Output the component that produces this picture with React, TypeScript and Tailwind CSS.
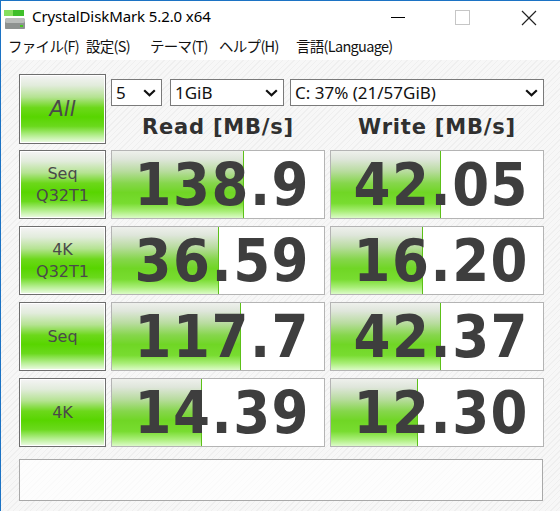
import React from "react";

const rows = [
  { label: ["Seq", "Q32T1"], read: "138.9", write: "42.05" },
  { label: ["4K", "Q32T1"], read: "36.59", write: "16.20" },
  { label: ["Seq"], read: "117.7", write: "42.37" },
  { label: ["4K"], read: "14.39", write: "12.30" },
];

function fillWidth(v: string) {
  const n = parseFloat(v);
  return Math.round(40.7 + 42.6 * Math.log10(n));
}

function Chevron() {
  return (
    <svg width="13" height="8" viewBox="0 0 13 8" className="shrink-0">
      <path d="M1.2 1.2 L6.5 6.3 L11.8 1.2" fill="none" stroke="#111" strokeWidth="2.2" />
    </svg>
  );
}

function Select({ w, text }: { w: string; text: string }) {
  return (
    <div
      className={`${w} h-[27px] bg-white border border-[#7a7a7a] flex items-center justify-between pl-[4px] pr-[5px] text-[17px] text-[#111]`}
      style={{ fontFamily: '"Noto Sans", sans-serif' }}
    >
      <span className="leading-none">{text}</span>
      <Chevron />
    </div>
  );
}

function GreenButton({ children }: { children: React.ReactNode }) {
  return (
    <div className="w-[87px] h-full border border-[#6e6e6e] p-px bg-white shrink-0">
      <div className="w-full h-full bg-[linear-gradient(to_bottom,#f3f3f3_0%,#e2ecdc_14%,#b5e392_32%,#6cd81a_48%,#58d500_62%,#6ad91c_76%,#b4ee8f_90%,#e8fadd_100%)] flex flex-col items-center justify-center text-[#4a4a4a] text-[16px] leading-[22px]"
        style={{ fontFamily: '"DejaVu Sans", sans-serif' }}>
        {children}
      </div>
    </div>
  );
}

function ValueCell({ value }: { value: string }) {
  const w = fillWidth(value);
  return (
    <div className="relative w-[214px] h-full border border-[#b4b4b4] bg-white overflow-hidden">
      <div
        className="absolute left-0 top-0 bottom-0 bg-[linear-gradient(to_bottom,#eef0ec_0%,#dfe6db_12%,#b9dca0_30%,#86d64c_48%,#70d625_62%,#78dc30_78%,#a9ee78_90%,#dcfbc8_100%)] border-r border-[#5cc018]"
        style={{ width: w }}
      />
      <div
        className="relative h-full flex items-center justify-end pr-[14px] text-[#3e3e3e] font-bold text-[59px] leading-none tracking-[1.5px]"
        style={{ fontFamily: '"DejaVu Sans Condensed", "DejaVu Sans", sans-serif', fontStretch: "condensed" }}
      >
        {value}
      </div>
    </div>
  );
}

export default function App() {
  return (
    <div className="w-[560px] h-[511px] bg-white border-l border-t border-[#1c73c4] overflow-hidden flex flex-col">
      {/* Title bar */}
      <div className="h-[30px] flex items-center shrink-0 relative">
        <svg width="24" height="24" viewBox="0 0 24 24" className="ml-[2px] mt-[2px]">
          <rect x="1" y="5" width="20" height="6" fill="#3fbf2a" />
          <rect x="1" y="5" width="9" height="6" fill="#86df5e" />
          <rect x="2" y="13" width="20" height="12" rx="2.5" fill="#8e9290" />
          <rect x="2" y="13" width="20" height="5" rx="2" fill="#b9bcba" />
          <rect x="17" y="20" width="3" height="2" fill="#46c81e" />
        </svg>
        <span className="ml-[5px] text-[15px] text-black tracking-[-0.1px]" style={{ fontFamily: '"Noto Sans", sans-serif' }}>
          CrystalDiskMark 5.2.0 x64
        </span>
        <div className="absolute left-[390px] top-[16px] w-[14px] h-px bg-black" />
        <div className="absolute left-[454px] top-[9px] w-[15px] h-[15px] border border-[#c6c6c6]" />
        <svg width="18" height="18" viewBox="0 0 18 18" className="absolute left-[519px] top-[8px]">
          <path d="M2 2 L16 16 M16 2 L2 16" stroke="#222" strokeWidth="1.2" />
        </svg>
      </div>
      {/* Menu bar */}
      <div className="h-[29px] flex items-center pl-[7px] text-[14.5px] tracking-[-0.7px] text-[#111] shrink-0 whitespace-nowrap"
        style={{ fontFamily: '"Noto Sans CJK JP", "Noto Sans", sans-serif' }}>
        <span className="w-[78px] shrink-0">ファイル(F)</span>
        <span className="w-[64px] shrink-0">設定(S)</span>
        <span className="w-[69px] shrink-0">テーマ(T)</span>
        <span className="w-[77px] shrink-0">ヘルプ(H)</span>
        <span className="shrink-0">言語(Language)</span>
      </div>
      {/* Content */}
      <div className="flex-1 bg-[repeating-linear-gradient(135deg,#f7f7f7_0px,#f7f7f7_3px,#efefef_3px,#efefef_4px)] pt-[14px] pl-[18px]">
        <div className="flex h-[70px] gap-[5px]">
          <GreenButton>
            <span className="text-[21px] italic">All</span>
          </GreenButton>
          <div className="flex flex-col">
            <div className="flex mt-[5px]">
              <Select w="w-[51px]" text="5" />
              <div className="w-[8px]" />
              <Select w="w-[114px]" text="1GiB" />
              <div className="w-[6px]" />
              <Select w="w-[254px]" text="C: 37% (21/57GiB)" />
            </div>
            <div className="flex gap-[5px] mt-[6px] text-[#303030] font-bold text-[21px] tracking-[0.8px]"
              style={{ fontFamily: '"DejaVu Sans", sans-serif' }}>
              <div className="w-[214px] text-center">Read [MB/s]</div>
              <div className="w-[214px] text-center">Write [MB/s]</div>
            </div>
          </div>
        </div>
        <div className="flex flex-col gap-[7px] mt-[6px]">
          {rows.map((r, i) => (
            <div key={i} className="flex h-[69px] gap-[5px]">
              <GreenButton>
                {r.label.map((l) => (
                  <span key={l}>{l}</span>
                ))}
              </GreenButton>
              <ValueCell value={r.read} />
              <ValueCell value={r.write} />
            </div>
          ))}
        </div>
        <div className="mt-[12px] w-[524px] h-[42px] border border-[#a9a9a9] bg-white/70" />
      </div>
    </div>
  );
}
